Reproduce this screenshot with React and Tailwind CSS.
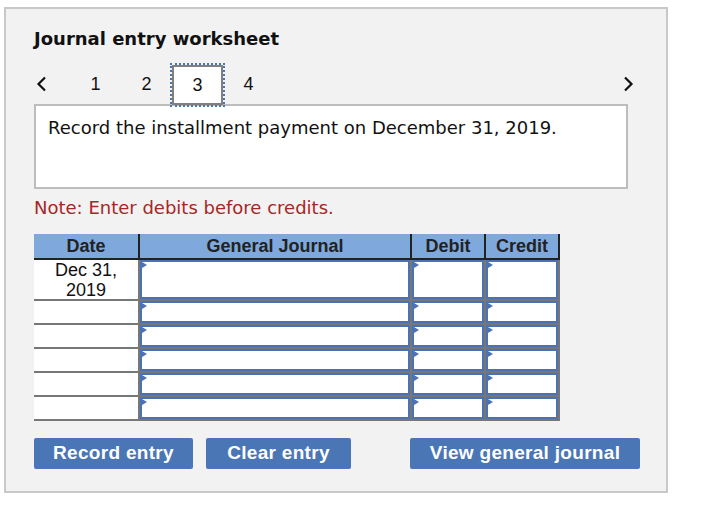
import React from "react";

const verdana = { fontFamily: '"DejaVu Sans", Verdana, sans-serif' };
const arial = { fontFamily: '"Liberation Sans", Arial, sans-serif' };

function Chevron({ dir }) {
  return (
    <svg width="11" height="16" viewBox="0 0 11 16" className="block">
      <polyline
        points={dir === "left" ? "9,1.5 2.5,8 9,14.5" : "2,1.5 8.5,8 2,14.5"}
        fill="none"
        stroke="#111"
        strokeWidth="2.2"
      />
    </svg>
  );
}

function Field() {
  return (
    <div className="relative h-full w-full border-2 border-[#4a72b4] bg-white">
      <span className="absolute left-0 top-0 h-0 w-0 border-y-[3px] border-l-[5px] border-y-transparent border-l-[#4a72b4]" />
    </div>
  );
}

function Row({ tall, date }) {
  return (
    <div
      className={`flex bg-white border-b-2 border-[#777] ${
        tall ? "h-[41px]" : "h-[24px]"
      }`}
    >
      <div className="w-[106px] border-r-2 border-[#777] flex flex-col items-center justify-center text-[18px] leading-[20px] text-[#111]">
        {date && (
          <>
            <span>Dec 31,</span>
            <span>2019</span>
          </>
        )}
      </div>
      <div className="w-[272px] border-r-2 border-[#777]">
        <Field />
      </div>
      <div className="w-[74px] border-r-2 border-[#777]">
        <Field />
      </div>
      <div className="w-[74px] border-r-2 border-[#777]">
        <Field />
      </div>
    </div>
  );
}

export default function App() {
  return (
    <div className="w-[702px] h-[514px] bg-white pt-[7px] pl-[4px]">
      <div className="w-[664px] h-[486px] border-2 border-[#c8c8c8] bg-[#f2f2f2] pl-[28px] pt-[19px]">
        <h1
          className="text-[18px] leading-[22px] font-bold text-[#111]"
          style={verdana}
        >
          Journal entry worksheet
        </h1>

        <div className="mt-[12px] flex items-end h-[42px] w-[600px]" style={arial}>
          <div className="w-[36px] h-[40px] flex items-center pl-[2px]">
            <Chevron dir="left" />
          </div>
          {[1, 2, 3, 4].map((n) => (
            <div
              key={n}
              className={`w-[51px] h-[40px] flex items-center justify-center text-[18px] text-[#111] ${
                n === 3
                  ? "relative z-10 -mb-[1px] bg-white border-2 border-[#808080] outline-2 outline-dotted outline-[#4a76b6]"
                  : ""
              }`}
            >
              {n}
            </div>
          ))}
          <div className="ml-auto h-[40px] flex items-center">
            <Chevron dir="right" />
          </div>
        </div>

        <div
          className="w-[594px] h-[85px] border-2 border-[#bdbdbd] bg-white px-[12px] pt-[11px] text-[18px] leading-[22px] text-[#111]"
          style={verdana}
        >
          Record the installment payment on December 31, 2019.
        </div>

        <p
          className="mt-[8px] text-[18px] leading-[22px] text-[#a42828]"
          style={verdana}
        >
          Note: Enter debits before credits.
        </p>

        <div className="mt-[15px] w-[526px]" style={arial}>
          <div className="flex h-[26px] bg-[#7fa9dd] border-b-2 border-[#222] text-[18px] font-bold text-[#222]">
            <div className="w-[106px] border-r-2 border-[#222] flex items-center justify-center">
              Date
            </div>
            <div className="w-[272px] border-r-2 border-[#222] flex items-center justify-center">
              General Journal
            </div>
            <div className="w-[74px] border-r-2 border-[#222] flex items-center justify-center">
              Debit
            </div>
            <div className="w-[74px] border-r-2 border-[#222] flex items-center justify-center">
              Credit
            </div>
          </div>
          <Row tall date />
          <Row />
          <Row />
          <Row />
          <Row />
          <Row />
        </div>

        <div className="mt-[17px] flex text-white text-[19px] font-bold tracking-[0.3px]" style={arial}>
          <button className="w-[159px] h-[31px] rounded-[2px] bg-[#4a76b6]">
            Record entry
          </button>
          <button className="ml-[13px] w-[145px] h-[31px] rounded-[2px] bg-[#4a76b6]">
            Clear entry
          </button>
          <button className="ml-[59px] w-[230px] h-[31px] rounded-[2px] bg-[#4a76b6]">
            View general journal
          </button>
        </div>
      </div>
    </div>
  );
}
